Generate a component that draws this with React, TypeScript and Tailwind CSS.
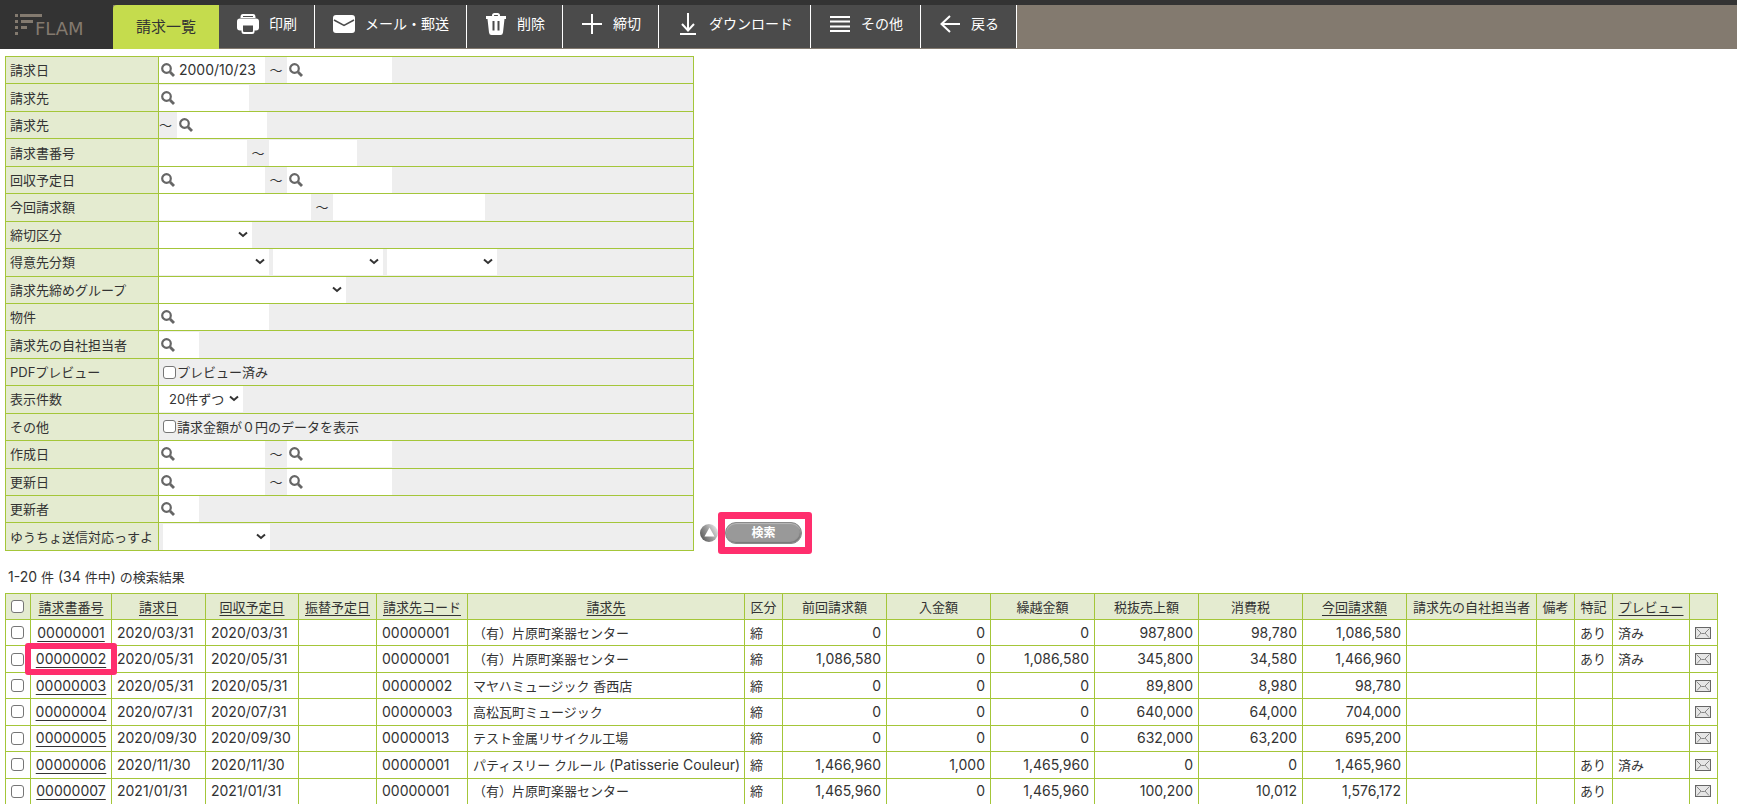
import { useState } from "react";
import type { ReactNode } from "react";

const MENU = [
  { label: "印刷", icon: <PrintIcon /> },
  { label: "メール・郵送", icon: <MailIcon /> },
  { label: "削除", icon: <TrashIcon /> },
  { label: "締切", icon: <PlusIcon /> },
  { label: "ダウンロード", icon: <DownloadIcon /> },
  { label: "その他", icon: <ListIcon /> },
  { label: "戻る", icon: <BackIcon /> },
];

const COLUMNS = [
  { label: "請求書番号", width: "w-[81px]", sortable: true },
  { label: "請求日", width: "w-[94px]", sortable: true },
  { label: "回収予定日", width: "w-[93px]", sortable: true },
  { label: "振替予定日", width: "w-[78px]", sortable: true },
  { label: "請求先コード", width: "w-[91px]", sortable: true },
  { label: "請求先", width: "w-[277px]", sortable: true },
  { label: "区分", width: "w-[38px]", sortable: false },
  { label: "前回請求額", width: "w-[104px]", sortable: false },
  { label: "入金額", width: "w-[104px]", sortable: false },
  { label: "繰越金額", width: "w-[104px]", sortable: false },
  { label: "税抜売上額", width: "w-[104px]", sortable: false },
  { label: "消費税", width: "w-[104px]", sortable: false },
  { label: "今回請求額", width: "w-[104px]", sortable: true },
  { label: "請求先の自社担当者", width: "w-[130px]", sortable: false },
  { label: "備考", width: "w-[38px]", sortable: false },
  { label: "特記", width: "w-[38px]", sortable: false },
  { label: "プレビュー", width: "w-[77px]", sortable: true },
];

const INVOICES = [
  { no: "00000001", date: "2020/03/31", due: "2020/03/31", code: "00000001", name: "（有）片原町楽器センター", latin: "", amounts: ["0", "0", "0", "987,800", "98,780", "1,086,580"], note: "あり", preview: "済み" },
  { no: "00000002", date: "2020/05/31", due: "2020/05/31", code: "00000001", name: "（有）片原町楽器センター", latin: "", amounts: ["1,086,580", "0", "1,086,580", "345,800", "34,580", "1,466,960"], note: "あり", preview: "済み" },
  { no: "00000003", date: "2020/05/31", due: "2020/05/31", code: "00000002", name: "マヤハミュージック 香西店", latin: "", amounts: ["0", "0", "0", "89,800", "8,980", "98,780"], note: "", preview: "" },
  { no: "00000004", date: "2020/07/31", due: "2020/07/31", code: "00000003", name: "高松瓦町ミュージック", latin: "", amounts: ["0", "0", "0", "640,000", "64,000", "704,000"], note: "", preview: "" },
  { no: "00000005", date: "2020/09/30", due: "2020/09/30", code: "00000013", name: "テスト金属リサイクル工場", latin: "", amounts: ["0", "0", "0", "632,000", "63,200", "695,200"], note: "", preview: "" },
  { no: "00000006", date: "2020/11/30", due: "2020/11/30", code: "00000001", name: "パティスリー クルール ", latin: "(Patisserie Couleur)", amounts: ["1,466,960", "1,000", "1,465,960", "0", "0", "1,465,960"], note: "あり", preview: "済み" },
  { no: "00000007", date: "2021/01/31", due: "2021/01/31", code: "00000001", name: "（有）片原町楽器センター", latin: "", amounts: ["1,465,960", "0", "1,465,960", "100,200", "10,012", "1,576,172"], note: "あり", preview: "" },
];

function PrintIcon() {
  return (
    <svg width="22" height="20" viewBox="0 0 22 20">
      <path d="M6 0h10q2.500 0 2.500 3v1h-15V3Q3.500 0 6 0z" fill="currentColor" />
      <path d="M6 2.500h10" stroke="#4b4b4b" strokeWidth="1" />
      <path d="M3 4.500h16q3 0 3 3v6q0 3-3 3H3q-3 0-3-3v-6q0-3 3-3z" fill="currentColor" />
      <path d="M4.500 10.500h13v7q0 2.500-2.500 2.500H7q-2.500 0-2.500-2.500z" fill="currentColor" />
      <path d="M6 11.500h10V17q0 1-1 1H7q-1 0-1-1z" fill="#4b4b4b" />
    </svg>
  );
}

function MailIcon() {
  return (
    <svg width="22" height="18" viewBox="0 0 22 18">
      <rect width="22" height="18" rx="3" fill="currentColor" />
      <path d="M1 5l10 5.500L21 5" fill="none" stroke="#4b4b4b" strokeWidth="1.500" />
    </svg>
  );
}

function TrashIcon() {
  return (
    <svg width="20" height="22" viewBox="0 0 20 22">
      <path d="M7 4V2.500Q7 1 8.500 1h3Q13 1 13 2.500V4" fill="none" stroke="currentColor" strokeWidth="2" />
      <path d="M0 3h20v3h-1.500L17 19.500q-.3 2.500-2.500 2.500h-9Q3.300 22 3 19.500L1.500 6H0z" fill="currentColor" />
      <path d="M7.500 8v9.500M12.500 8v9.500" stroke="#4b4b4b" strokeWidth="2" />
    </svg>
  );
}

function PlusIcon() {
  return (
    <svg width="20" height="20" viewBox="0 0 20 20" fill="none" stroke="currentColor" strokeWidth="2">
      <path d="M10 0v20M0 10h20" />
    </svg>
  );
}

function DownloadIcon() {
  return (
    <svg width="16" height="22" viewBox="0 0 16 22" fill="none" stroke="currentColor" strokeWidth="2">
      <path d="M8 0v17M2 11l6 6.500 6-6.500M0 21h16" />
    </svg>
  );
}

function ListIcon() {
  return (
    <svg width="20" height="16" viewBox="0 0 20 16" fill="none" stroke="currentColor" strokeWidth="2">
      <path d="M0 1h20M0 5.500h20M0 10.500h20M0 15h20" />
    </svg>
  );
}

function BackIcon() {
  return (
    <svg width="20" height="18" viewBox="0 0 20 18" fill="none" stroke="currentColor" strokeWidth="2">
      <path d="M1.500 9H20M10 1L1.500 9l8.500 8" />
    </svg>
  );
}

function SearchIcon() {
  return (
    <svg width="14" height="14" viewBox="0 0 14 14" fill="none" stroke="#666" className="shrink-0">
      <circle cx="5.500" cy="5.500" r="4.300" strokeWidth="2.200" />
      <path d="M9 9l4 4" strokeWidth="2.800" />
    </svg>
  );
}

function EnvelopeIcon() {
  return (
    <svg width="16" height="12" viewBox="0 0 16 12" fill="none">
      <rect x="0.500" y="0.500" width="15" height="11" fill="#e6e6e6" stroke="#666" />
      <path d="M1.500 1.500L6.500 6.500h3L14.500 1.500M2 10.500L6 6M14 10.500L10 6" stroke="#888" />
    </svg>
  );
}

function Logo() {
  return (
    <svg width="90" height="32" viewBox="0 0 90 32" role="img" aria-label="FLAM">
      <path
        d="M0 2.500h3M5 2.500h22M0 8.500h3M6 8.500h12M0 14.500h3M6 14.500h6M0 20.500h3"
        fill="none"
        stroke="#837a6f"
        strokeWidth="3"
      />
      <text x="20" y="22" fill="#837a6f" className="font-['DejaVu_Sans'] text-[18px]">
        FLAM
      </text>
    </svg>
  );
}

function Lookup({ label, width, value = "" }: { label: string; width: string; value?: string }) {
  return (
    <span className={`flex h-full items-center gap-1 bg-white pl-0.5 ${width}`}>
      <SearchIcon />
      <input type="text" aria-label={label} defaultValue={value} className="w-full min-w-0 text-sm outline-none" />
    </span>
  );
}

function TextBox({ label, width }: { label: string; width: string }) {
  return <input type="text" aria-label={label} className={`h-full bg-white px-1 outline-none ${width}`} />;
}

function Select({ label, width, option = "" }: { label: string; width: string; option?: string }) {
  return (
    <span className={`relative h-full ${width}`}>
      <select aria-label={label} className="h-full w-full appearance-none bg-white pl-2.5 outline-none">
        <option>{option}</option>
      </select>
      <svg width="10" height="7" viewBox="0 0 10 7" fill="none" className="pointer-events-none absolute top-1/2 right-1 -mt-1">
        <path d="M1 1.500l4 3.500 4-3.500" stroke="#333" strokeWidth="2" />
      </svg>
    </span>
  );
}

function Tilde() {
  return <span className="w-[22px] text-center">～</span>;
}

function DateRange({ label, from }: { label: string; from?: string }) {
  return (
    <>
      <Lookup label={`${label} 開始`} width="w-[106px]" value={from} />
      <Tilde />
      <Lookup label={`${label} 終了`} width="w-[105px]" />
    </>
  );
}

function Check({ label }: { label: string }) {
  return (
    <label className="flex items-center pl-1">
      <Checkbox />
      <span className="pl-px">{label}</span>
    </label>
  );
}

function Checkbox({ label, checked, onChange }: { label?: string; checked?: boolean; onChange?: () => void }) {
  return (
    <input
      type="checkbox"
      aria-label={label}
      checked={checked}
      onChange={onChange}
      className="block size-[13px] shrink-0 appearance-none rounded-[3px] border border-[#767676] bg-white checked:bg-[#0075ff]"
    />
  );
}

const FILTERS: { label: string; field: ReactNode }[] = [
  { label: "請求日", field: <DateRange label="請求日" from="2000/10/23" /> },
  { label: "請求先", field: <Lookup label="請求先 開始" width="w-[90px]" /> },
  {
    label: "請求先",
    field: (
      <>
        <span className="w-[18px]">～</span>
        <Lookup label="請求先 終了" width="w-[90px]" />
      </>
    ),
  },
  {
    label: "請求書番号",
    field: (
      <>
        <TextBox label="請求書番号 開始" width="w-[88px]" />
        <Tilde />
        <TextBox label="請求書番号 終了" width="w-[88px]" />
      </>
    ),
  },
  { label: "回収予定日", field: <DateRange label="回収予定日" /> },
  {
    label: "今回請求額",
    field: (
      <>
        <TextBox label="今回請求額 下限" width="w-[152px]" />
        <Tilde />
        <TextBox label="今回請求額 上限" width="w-[152px]" />
      </>
    ),
  },
  { label: "締切区分", field: <Select label="締切区分" width="w-[93px]" /> },
  {
    label: "得意先分類",
    field: (
      <span className="flex h-full gap-1">
        <Select label="得意先分類1" width="w-[110px]" />
        <Select label="得意先分類2" width="w-[110px]" />
        <Select label="得意先分類3" width="w-[110px]" />
      </span>
    ),
  },
  { label: "請求先締めグループ", field: <Select label="請求先締めグループ" width="w-[187px]" /> },
  { label: "物件", field: <Lookup label="物件" width="w-[110px]" /> },
  { label: "請求先の自社担当者", field: <Lookup label="請求先の自社担当者" width="w-10" /> },
  { label: "PDFプレビュー", field: <Check label="プレビュー済み" /> },
  { label: "表示件数", field: <Select label="表示件数" width="w-[84px]" option="20件ずつ" /> },
  { label: "その他", field: <Check label="請求金額が０円のデータを表示" /> },
  { label: "作成日", field: <DateRange label="作成日" /> },
  { label: "更新日", field: <DateRange label="更新日" /> },
  { label: "更新者", field: <Lookup label="更新者" width="w-10" /> },
  {
    label: "ゆうちょ送信対応っすよ",
    field: (
      <span className="flex h-full pl-1">
        <Select label="ゆうちょ送信対応っすよ" width="w-[107px]" />
      </span>
    ),
  },
];

export default function App() {
  const [selected, setSelected] = useState<string[]>([]);

  const toggle = (no: string) =>
    setSelected((prev) => (prev.includes(no) ? prev.filter((item) => item !== no) : [...prev, no]));
  const allSelected = selected.length === INVOICES.length;

  return (
    <div className="h-screen overflow-hidden bg-white font-[Inter,'Noto_Sans_CJK_JP',sans-serif] text-[13px] leading-5 text-[#333]">
      <header className="flex h-[49px] border-t-5 border-[#333] bg-[#837a6f]">
        <div className="w-[113px] shrink-0 bg-[#333] pt-2 pl-[15px]">
          <Logo />
        </div>
        <h1 className="flex w-[106px] shrink-0 items-center justify-center rounded-tl bg-[#c5dc4d] text-[15px]">請求一覧</h1>
        <nav className="flex pb-px">
          {MENU.map((item) => (
            <button
              key={item.label}
              type="button"
              className="flex items-center gap-2 border-r border-white bg-[#4b4b4b] pr-[17px] pb-1.5 pl-4 text-sm whitespace-nowrap text-white"
            >
              <span className="flex w-[26px] justify-center">{item.icon}</span>
              {item.label}
            </button>
          ))}
        </nav>
      </header>

      <main className="px-[5px] pt-[7px]">
        <div className="flex items-end">
          <table className="h-[495px] border-collapse">
            <tbody>
              {FILTERS.map((filter, index) => (
                <tr key={index}>
                  <th className="w-[153px] border border-[#a4c639] bg-[#e4ebd0] px-1 py-0 text-left font-normal whitespace-nowrap">
                    {filter.label}
                  </th>
                  <td className="w-[535px] border border-[#a4c639] bg-[#eee] p-0">
                    <div className="flex h-[26px] items-center">{filter.field}</div>
                  </td>
                </tr>
              ))}
            </tbody>
          </table>
          <div className="-mb-[3px] flex items-center pl-1.5">
            <button type="button" aria-label="検索条件を閉じる">
              <svg width="18" height="18" viewBox="0 0 18 18">
                <defs>
                  <linearGradient id="ball" x1="0" y1="0.800" x2="1" y2="0.200">
                    <stop offset="0" stopColor="#555" />
                    <stop offset="0.500" stopColor="#999" />
                    <stop offset="1" stopColor="#eee" />
                  </linearGradient>
                </defs>
                <circle cx="9" cy="9" r="9" fill="url(#ball)" />
                <path d="M9.500 3.500l5 9h-10z" fill="#fff" />
              </svg>
            </button>
            <div className="rounded-[3px] border-7 border-[#ff2e6d] bg-white py-[3px] pr-[3px]">
              <button
                type="button"
                className="block h-[22px] w-[77px] rounded-full border border-[#8a8a8a] bg-[#999] text-xs leading-5 font-bold text-white shadow-[inset_0_1px_1px_#bbb,inset_-1px_-1px_1px_#777]"
              >
                検索
              </button>
            </div>
          </div>
        </div>

        <p className="mt-4 mb-1.5 pl-[3px]">
          <span className="text-sm">1-20 </span>件<span className="text-sm"> (34 </span>件中
          <span className="text-sm">) </span>の検索結果
        </p>

        <table className="h-[212px] border-collapse whitespace-nowrap">
          <thead>
            <tr className="h-[26px] bg-[#e4ebd0]">
              <th className="w-[25px] border border-[#a4c639] p-0 pl-[5px]">
                <Checkbox
                  label="すべて選択"
                  checked={allSelected}
                  onChange={() => setSelected(allSelected ? [] : INVOICES.map((invoice) => invoice.no))}
                />
              </th>
              {COLUMNS.map((column) => (
                <th key={column.label} className={`border border-[#a4c639] p-0 font-normal ${column.width}`}>
                  {column.sortable ? (
                    <a href="#" className="underline underline-offset-3">
                      {column.label}
                    </a>
                  ) : (
                    column.label
                  )}
                </th>
              ))}
              <th className="w-7 border border-[#a4c639] p-0" />
            </tr>
          </thead>
          <tbody>
            {INVOICES.map((invoice) => (
              <tr key={invoice.no} className="h-[26px] *:border *:border-[#a4c639] *:px-[5px] *:py-0">
                <td>
                  <Checkbox
                    label={`${invoice.no} を選択`}
                    checked={selected.includes(invoice.no)}
                    onChange={() => toggle(invoice.no)}
                  />
                </td>
                <td className="relative px-1! text-center text-sm">
                  <a href="#" className="underline underline-offset-3">
                    {invoice.no}
                  </a>
                  {invoice.no === "00000002" ? (
                    <span className="pointer-events-none absolute -inset-x-1.5 -inset-y-[3px] z-10 rounded-[3px] border-6 border-[#ff2e6d]" />
                  ) : null}
                </td>
                <td className="text-sm">{invoice.date}</td>
                <td className="text-sm">{invoice.due}</td>
                <td />
                <td className="text-sm">{invoice.code}</td>
                <td className="pr-0.5!">
                  {invoice.name}
                  {invoice.latin ? <span className="text-sm">{invoice.latin}</span> : null}
                </td>
                <td>締</td>
                {invoice.amounts.map((amount, index) => (
                  <td key={index} className="text-right text-sm">
                    {amount}
                  </td>
                ))}
                <td />
                <td />
                <td>{invoice.note}</td>
                <td>{invoice.preview}</td>
                <td>
                  <button type="button" aria-label={`${invoice.no} をメール送信`} className="block">
                    <EnvelopeIcon />
                  </button>
                </td>
              </tr>
            ))}
          </tbody>
        </table>
      </main>
    </div>
  );
}
